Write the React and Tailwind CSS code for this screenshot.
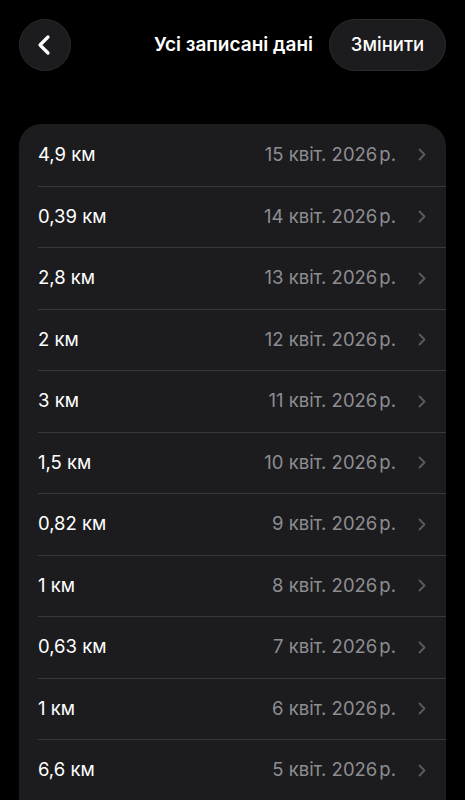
import { ChevronLeft } from "lucide-react";

const rows = [
  ["4,9 км", "15 квіт. 2026"],
  ["0,39 км", "14 квіт. 2026"],
  ["2,8 км", "13 квіт. 2026"],
  ["2 км", "12 квіт. 2026"],
  ["3 км", "11 квіт. 2026"],
  ["1,5 км", "10 квіт. 2026"],
  ["0,82 км", "9 квіт. 2026"],
  ["1 км", "8 квіт. 2026"],
  ["0,63 км", "7 квіт. 2026"],
  ["1 км", "6 квіт. 2026"],
  ["6,6 км", "5 квіт. 2026"],
];

function RowChevron() {
  return (
    <svg width="8" height="13" viewBox="0 0 8 13" className="ml-[22px] shrink-0">
      <path d="M1.5 1.5 L6.5 6.5 L1.5 11.5" fill="none" stroke="#5b5b5f" strokeWidth="1.8" strokeLinecap="round" strokeLinejoin="round" />
    </svg>
  );
}

export default function App() {
  return (
    <div className="h-[800px] overflow-hidden bg-black text-white font-['Inter','Noto_Sans',sans-serif]">
      <div className="flex items-center px-[19px] pt-[19px]">
        <button className="flex h-[52px] w-[52px] items-center justify-center rounded-full border border-[#2a2a2c] bg-[#1c1c1e]">
          <ChevronLeft size={32} strokeWidth={2.4} className="-ml-[2px] text-white" />
        </button>
        <div className="flex-1 pr-[16px] text-right text-[19px] font-semibold">Усі записані дані</div>
        <button className="h-[52px] w-[117px] rounded-full border border-[#2a2a2c] bg-[#1c1c1e] text-[18.5px] font-medium">
          Змінити
        </button>
      </div>

      <div className="mx-[19px] mt-[53px] rounded-[22px] bg-[#1c1c1e] pb-[40px] pl-[19px]">
        {rows.map(([dist, date], i) => (
          <div key={i} className={`flex h-[61.5px] items-center pr-[20px] ${i > 0 ? "border-t border-[#38383a]" : ""}`}>
            <div className="flex-1 text-[18.5px] text-white">{dist}</div>
            <div className="text-[18.5px] text-[#8d8d92]">
              {date}
              <span className="ml-[2px]">р.</span>
            </div>
            <RowChevron />
          </div>
        ))}
      </div>
    </div>
  );
}
